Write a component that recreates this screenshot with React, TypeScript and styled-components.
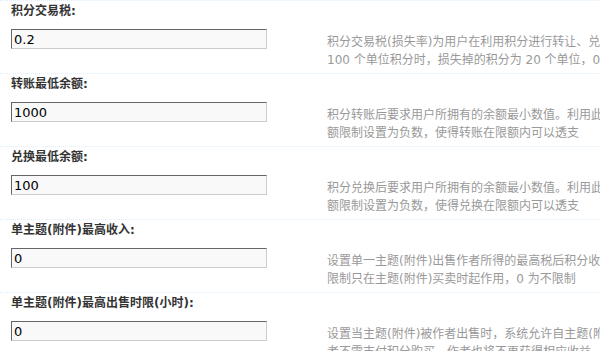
import React from 'react';
import styled, { createGlobalStyle } from 'styled-components';

const GlobalStyle = createGlobalStyle`
  html, body {
    margin: 0;
    padding: 0;
    background: #fff;
    overflow: hidden;
  }
  body {
    font: 12px "DejaVu Sans", "Noto Sans CJK SC", sans-serif;
    color: #333;
  }
`;

type Setting = { label: string; value: string; tips: string[] };

const SETTINGS: Setting[] = [
  {
    label: '积分交易税:',
    value: '0.2',
    tips: [
      '积分交易税(损失率)为用户在利用积分进行转让、兑换、买卖时扣除的税率，范围为 0～1 之间的浮点数，例如设置为 0.2，则用户在转换',
      '100 个单位积分时，损失掉的积分为 20 个单位，0 为不损失',
    ],
  },
  {
    label: '转账最低余额:',
    value: '1000',
    tips: [
      '积分转账后要求用户所拥有的余额最小数值。利用此功能，你可以设置较大的余额限制，使积分小于这个数值的用户无法转账；也可以将余',
      '额限制设置为负数，使得转账在限额内可以透支',
    ],
  },
  {
    label: '兑换最低余额:',
    value: '100',
    tips: [
      '积分兑换后要求用户所拥有的余额最小数值。利用此功能，你可以设置较大的余额限制，使积分小于这个数值的用户无法兑换；也可以将余',
      '额限制设置为负数，使得兑换在限额内可以透支',
    ],
  },
  {
    label: '单主题(附件)最高收入:',
    value: '0',
    tips: [
      '设置单一主题(附件)出售作者所得的最高税后积分收入，超过此限制后购买者将仍然被扣除相应积分，但主题(附件)作者收益将不再增加，此',
      '限制只在主题(附件)买卖时起作用，0 为不限制',
    ],
  },
  {
    label: '单主题(附件)最高出售时限(小时):',
    value: '0',
    tips: [
      '设置当主题(附件)被作者出售时，系统允许自主题(附件)发布时间起，其可被出售的最长时间。超过此时间限制后将变为普通主题(附件)，阅读',
      '者不需支付积分购买，作者也将不再获得相应收益',
    ],
  },
];

const Page = styled.div`
  width: 1000px;
`;

const Section = styled.div`
  border-top: 1px dotted #deeffb;
  padding: 0 0 4px 11px;
  height: 68px;
`;

const Label = styled.div`
  font-weight: 700;
  line-height: 20px;
  height: 20px;
  color: #333;
  white-space: nowrap;
`;

const Row = styled.div`
  display: flex;
  align-items: flex-start;
  margin-top: 8px;
`;

const Input = styled.input`
  box-sizing: border-box;
  width: 256px;
  height: 20px;
  margin: 0;
  padding: 0 0 0 2px;
  border: 1px solid;
  border-color: #666 #ccc #ccc #666;
  background: #f9f9f9;
  font: 13px "DejaVu Sans", sans-serif;
  color: #000;
  outline: none;
  flex: none;
`;

const Tips = styled.div`
  margin: 4px 0 0 60px;
  color: #999;
  line-height: 18px;
  white-space: nowrap;
`;

export default function App() {
  return (
    <Page>
      <GlobalStyle />
      {SETTINGS.map((s) => (
        <Section key={s.label}>
          <Label>{s.label}</Label>
          <Row>
            <Input type="text" defaultValue={s.value} />
            <Tips>
              {s.tips.map((t) => (
                <div key={t}>{t}</div>
              ))}
            </Tips>
          </Row>
        </Section>
      ))}
    </Page>
  );
}
